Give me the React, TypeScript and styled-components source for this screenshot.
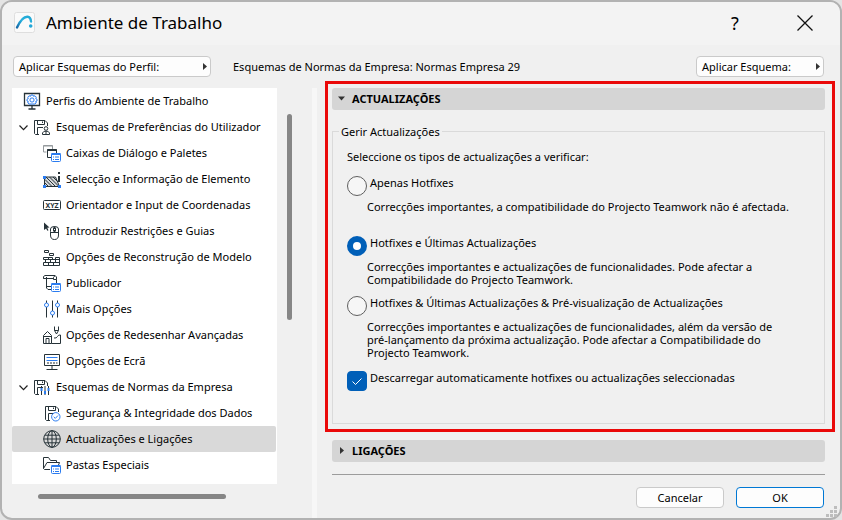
import React, { useState } from "react";
import styled, { createGlobalStyle } from "styled-components";

const INK = "#263238";
const BLUE = "#2b7cf0";

const GlobalStyle = createGlobalStyle`
  *, *::before, *::after { box-sizing: border-box; }
  body {
    margin: 0;
    background: #e4e4e4;
    color: #000;
    font: 11px/13px "Noto Sans", "Open Sans", sans-serif;
  }
  button, input { font: inherit; color: inherit; }
`;

const Dialog = styled.main`
  display: flex;
  flex-direction: column;
  min-height: 100vh;
  border: 2px solid #b2b2b2;
  border-radius: 12px;
  background: #f0f0f0;
  overflow: hidden;
`;

const TitleBar = styled.header`
  display: flex;
  align-items: center;
  height: 43px;
  padding: 0 23px 2px 12px;
  background: #f3f3f3;
`;

const Title = styled.h1`
  flex: 1;
  margin: 0 0 0 11px;
  font-size: 17px;
  line-height: 24px;
  font-weight: 400;
`;

const TitleButton = styled.button`
  display: flex;
  align-items: center;
  justify-content: center;
  width: 24px;
  height: 24px;
  margin-left: 46px;
  padding: 0;
  border: 0;
  background: none;
  font-size: 18px;
  line-height: 24px;
`;

const Toolbar = styled.div`
  display: flex;
  align-items: center;
  height: 36px;
  padding: 7px 16px 0 11px;
`;

const SchemeName = styled.div`
  flex: 1;
  padding-left: 22px;
`;

const PushButton = styled.button<{ $width: number; $primary?: boolean }>`
  width: ${(p) => p.$width}px;
  height: 21px;
  padding: 0 5px;
  border: 1px solid ${(p) => (p.$primary ? "#0078d4" : "#cacaca")};
  border-radius: 4px;
  background: #fdfdfd;
`;

const PopupButton = styled(PushButton)`
  display: flex;
  align-items: center;
  justify-content: space-between;
  padding-right: 1px;
`;

const Body = styled.div`
  display: grid;
  grid-template-columns: 310px 5px minmax(0, 1fr);
  flex: 1;
`;

const Sidebar = styled.nav`
  display: grid;
  grid-template-columns: 265px 5px;
  column-gap: 10px;
  align-content: start;
  padding: 7px 0 0 10px;
`;

const Tree = styled.ul`
  margin: 0;
  padding: 0 1px 6px 0;
  list-style: none;
  background: #fff;
`;

const TreeItem = styled.button<{ $level: number; $selected: boolean; $branch: boolean }>`
  display: flex;
  align-items: center;
  gap: 5px;
  width: 100%;
  height: 26px;
  padding: 0 0 0 ${(p) => (p.$branch ? 7 : 11 + p.$level * 10)}px;
  border: 0;
  border-radius: 2px;
  background: ${(p) => (p.$selected ? "#d9d9d9" : "transparent")};
  text-align: left;
  white-space: nowrap;
`;

const ItemText = styled.span`
  padding-bottom: 2px;
`;

const VerticalThumb = styled.div`
  height: 206px;
  margin-top: 26px;
  border-radius: 3px;
  background: #868686;
`;

const HorizontalThumb = styled.div`
  width: 188px;
  height: 5px;
  margin: 10px 0 0 26px;
  border-radius: 3px;
  background: #868686;
`;

const Splitter = styled.div`
  margin-top: 7px;
  background: #f7f7f7;
`;

const Content = styled.div`
  display: flex;
  flex-direction: column;
  padding: 0 5px 0 8px;
`;

const Highlight = styled.section`
  padding: 4px 7px 5px 4px;
  border: 3px solid #ea0909;
`;

const SectionHeader = styled.button`
  display: flex;
  align-items: center;
  gap: 6px;
  width: 100%;
  height: 22px;
  padding: 0 5px 2px;
  border: 0;
  border-radius: 3px;
  background: #d5d5d5;
  font-weight: 700;
`;

const Group = styled.fieldset`
  min-height: 300px;
  margin: 14px 0 0;
  padding: 11px 14px 0;
  border: 1px solid #dadada;
`;

const Legend = styled.legend`
  margin-left: -8px;
  padding: 0 2px;
  line-height: 15px;
`;

const Prompt = styled.p`
  margin: 0 0 13px;
`;

const Option = styled.div`
  min-height: 60px;
  padding-bottom: 10px;
`;

const Choice = styled.label`
  display: flex;
  gap: 3px;
  height: 20px;
`;

const DownloadChoice = styled(Choice)`
  margin-top: 2px;
`;

const Radio = styled.input.attrs({ type: "radio" })`
  appearance: none;
  flex: none;
  width: 20px;
  height: 20px;
  margin: 0;
  border: 1px solid #5f5f5f;
  border-radius: 50%;
  background: #f6f6f6;
  &:checked {
    border: 6px solid #005fb8;
    background: #fff;
  }
`;

const CheckMark = styled.span`
  display: grid;
  flex: none;
  width: 20px;
  height: 20px;
  > * { grid-area: 1 / 1; }
`;

const Checkbox = styled.input.attrs({ type: "checkbox" })`
  appearance: none;
  width: 20px;
  height: 20px;
  margin: 0;
  border: 1px solid #5f5f5f;
  border-radius: 4px;
  background: #f6f6f6;
  &:checked {
    border-color: #005fb8;
    background: #005fb8;
  }
`;

const Description = styled.p`
  max-width: 425px;
  margin: 4px 0 0 20px;
`;

const Lower = styled.div`
  margin: 8px 10px 0 7px;
`;

const Actions = styled.footer`
  display: flex;
  justify-content: flex-end;
  gap: 12px;
  margin-top: 12px;
  padding: 12px 1px 10px 0;
  border-top: 1px solid #9c9c9c;
`;

const Grip = styled.svg`
  position: absolute;
  right: 5px;
  bottom: 3px;
`;

const Frame = styled.div`
  position: relative;
`;

const Triangle = ({ down = false }: { down?: boolean }) => (
  <svg width="9" height="9" viewBox="0 0 9 9" fill="#333" aria-hidden="true">
    <path d={down ? "M1 2.5H8L4.5 6.5Z" : "M3 1V8L7 4.5Z"} />
  </svg>
);

const Chevron = () => (
  <svg width="9" height="9" viewBox="0 0 9 9" fill="none" stroke="#222" strokeWidth="1.2" aria-hidden="true">
    <path d="M0.5 2.5L4.5 6.7L8.5 2.5" />
  </svg>
);

const BlueSheet = () => (
  <g>
    <rect x="8.5" y="9.5" width="9" height="8" rx="1" fill="#fff" stroke={BLUE} />
    <path d="M8.5 10H17.5" stroke={BLUE} strokeWidth="2" />
    <path d="M10 13H11M12 13H16M10 15.5H11M12 15.5H16" stroke={BLUE} />
  </g>
);

const Floppy = () => (
  <g>
    <path d="M6 16.5H2.5L1.5 15.5V2.5H12L14.5 5V8" />
    <path d="M4.5 2.5V6.5H11.5V2.5M9.5 3.5V5M4.5 16V9.5H10" />
  </g>
);

const icons: Record<string, React.ReactNode> = {
  profile: (
    <>
      <path d="M1.5 1.5H16.5V13.5H1.5ZM9 13.5V17M5.5 17H12.5" strokeWidth="1.3" />
      <path
        stroke={BLUE}
        fill="#fff"
        d="M8 3H10L10.5 4.3L12 3.8L13.3 5.2L12.7 6.6L14 7.2V9L12.7 9.5L13.2 11L12 12H6L4.8 11L5.3 9.5L4 9V7.2L5.3 6.6L4.8 5.2L6 3.8L7.5 4.3Z"
      />
      <circle cx="9" cy="8" r="2.1" stroke={BLUE} fill="#fff" />
    </>
  ),
  user: (
    <>
      <Floppy />
      <circle cx="13" cy="10.5" r="1.8" fill="#fff" />
      <path d="M9.5 16.5V15L11 13.3H15L16.5 15V16.5ZM13 13.5V16" fill="#fff" />
    </>
  ),
  dialogs: (
    <>
      <path d="M3.5 8H0.5V1.5H9.5V5M0.5 2H9.5" stroke="#969b9e" />
      <path d="M8 13.5H4.5V5.5H13.5V9" />
      <path d="M4.5 6H13.5" strokeWidth="2" />
      <BlueSheet />
    </>
  ),
  selection: (
    <>
      <path d="M1.5 7H12.5L16.5 16.5H1.5Z" fill="#d6d8d9" />
      <path d="M2 9.5L9 16.5M2 13L5.5 16.5M3 7L12.5 16.5M6.5 7L16 16.5M10 7L15 12" />
      <path d="M16 2V4M16 6V12" strokeWidth="2" />
      <path d="M0 6H3V9H0ZM0 15H3V18H0ZM15 15H18V18H15Z" fill={BLUE} stroke="none" />
    </>
  ),
  xyz: (
    <>
      <rect x="0.5" y="4.5" width="17" height="9" rx="1" />
      <text x="9" y="12" textAnchor="middle" fontSize="7" fontWeight="700" fill={INK} stroke="none">XYZ</text>
    </>
  ),
  mouse: (
    <>
      <path d="M1 0.5L6.5 5.5L4.2 5.8L5.5 8.2L4.3 8.7L3.1 6.4L1 8Z" fill={INK} stroke="none" />
      <path d="M7.5 9.5V7Q7.5 4.5 11.5 4.5T15.5 7V13Q15.5 17.5 11.5 17.5T7.5 13V9.5M7.5 10.5H15.5M11.5 4.5V6M11.5 9V10.5" />
      <rect x="10.5" y="6" width="2" height="3" />
    </>
  ),
  bricks: (
    <>
      <path d="M1.5 2.5H5.5V4.5H1.5ZM6.5 5.5H10.5V7.5H6.5ZM12.5 11.5V9.5H16.5V11.5" />
      <path d="M0.5 9.5H9.5V11.5M0.5 9.5V11.5M0.5 11.5H17M5.5 9.5V11.5M2.5 11.5V14.5M7.5 11.5V14.5M12.5 11.5V14.5M16.5 11.5V14.5M0.5 14.5H17M0.5 14.5V17.5H16.5V14.5M5.5 14.5V17.5M10.5 14.5V17.5" />
    </>
  ),
  publisher: (
    <>
      <path d="M3.5 4.5H0.5V2.5L2 1.5H12L13.5 3V5.5H10.5V3.5L12 1.5M3.5 3V14L5 15.5H8M0.5 4.5H10.5M3.5 12.5H8M13.5 5.5V9" />
      <BlueSheet />
    </>
  ),
  sliders: (
    <>
      <path d="M3.5 0.5V3M3.5 7V17.5M9.5 0.5V11M9.5 15V17.5M14.5 0.5V3M14.5 7V17.5" />
      <g stroke={BLUE} fill="#fff">
        <circle cx="3.5" cy="5" r="2" />
        <circle cx="9.5" cy="13" r="2" />
        <circle cx="14.5" cy="5" r="2" />
      </g>
    </>
  ),
  redraw: (
    <>
      <path d="M0.5 9.5L4.5 5.5L8.5 9.5V17.5H0.5ZM0.5 10.5H8.5M3 17V12.5H6V17" />
      <path d="M11.5 0.5V4.5L13.5 8L15.5 4.5V0.5M11.5 4.5H15.5M8.5 17.5H17.5V9Q15.5 8.5 14.5 10.5T11 12" />
    </>
  ),
  screen: (
    <>
      <path d="M1.5 2.5H16.5V13.5H1.5ZM9 13.5V17M3.5 17.5H14.5" />
      <path d="M3.5 5.5H14.5" stroke={BLUE} />
      <path d="M3.5 8.5H14.5" stroke={BLUE} />
      <path d="M4 11H14.5" strokeDasharray="2 1" />
    </>
  ),
  standards: (
    <>
      <Floppy />
      <path d="M8.5 8V17M12 8V17M15.5 8V17" />
      <path d="M7.5 11.5H9.5M11 14.5H13M14.5 11.5H16.5" stroke={BLUE} strokeWidth="3" />
    </>
  ),
  security: (
    <>
      <g transform="translate(1 0)"><Floppy /></g>
      <circle cx="12.8" cy="12.8" r="4.2" stroke={BLUE} fill="#fff" />
      <path d="M10.7 12.8L12.3 14.4L15 11.5" stroke={BLUE} />
    </>
  ),
  globe: (
    <>
      <circle cx="9" cy="9" r="8.3" />
      <ellipse cx="9" cy="9" rx="4.3" ry="8.3" />
      <path d="M9 0.7V17.3M0.7 9H17.3M2 5.2H16M2 12.8H16" />
    </>
  ),
  folder: (
    <>
      <path d="M7 13.5H1.5L0.5 12.5V1.5H5.5L7.5 4.5H13.5V7M0.5 12.5L4 6.5H16.5L15.5 9" />
      <BlueSheet />
    </>
  ),
};

const Icon = ({ name }: { name: string }) => (
  <svg width="18" height="18" viewBox="0 0 18 18" fill="none" stroke={INK} aria-hidden="true">
    {icons[name]}
  </svg>
);

const AppLogo = () => (
  <svg width="21" height="22" viewBox="0 0 21 22" aria-hidden="true">
    <defs>
      <linearGradient id="arc" x1="0" y1="1" x2="1" y2="0">
        <stop offset="0" stopColor="#1769a8" />
        <stop offset="0.5" stopColor="#27b2df" />
        <stop offset="1" stopColor="#23a8d4" />
      </linearGradient>
    </defs>
    <rect x="0.5" y="0.5" width="20" height="20" rx="2" fill="#fafafa" stroke="#dedede" />
    <path d="M3 15.5C6 9 10 4.5 13.5 4.7C16 5 16.8 6.5 17 9.5" fill="none" stroke="url(#arc)" strokeWidth="2.4" strokeLinecap="round" />
    <circle cx="16.7" cy="14" r="1.8" fill="#22a7d8" />
  </svg>
);

const items: { text: string; icon: string; level: number; branch?: boolean }[] = [
  { text: "Perfis do Ambiente de Trabalho", icon: "profile", level: 0 },
  { text: "Esquemas de Preferências do Utilizador", icon: "user", level: 1, branch: true },
  { text: "Caixas de Diálogo e Paletes", icon: "dialogs", level: 2 },
  { text: "Selecção e Informação de Elemento", icon: "selection", level: 2 },
  { text: "Orientador e Input de Coordenadas", icon: "xyz", level: 2 },
  { text: "Introduzir Restrições e Guias", icon: "mouse", level: 2 },
  { text: "Opções de Reconstrução de Modelo", icon: "bricks", level: 2 },
  { text: "Publicador", icon: "publisher", level: 2 },
  { text: "Mais Opções", icon: "sliders", level: 2 },
  { text: "Opções de Redesenhar Avançadas", icon: "redraw", level: 2 },
  { text: "Opções de Ecrã", icon: "screen", level: 2 },
  { text: "Esquemas de Normas da Empresa", icon: "standards", level: 1, branch: true },
  { text: "Segurança & Integridade dos Dados", icon: "security", level: 2 },
  { text: "Actualizações e Ligações", icon: "globe", level: 2 },
  { text: "Pastas Especiais", icon: "folder", level: 2 },
];

const options = [
  {
    label: "Apenas Hotfixes",
    description: "Correcções importantes, a compatibilidade do Projecto Teamwork não é afectada.",
  },
  {
    label: "Hotfixes e Últimas Actualizações",
    description:
      "Correcções importantes e actualizações de funcionalidades. Pode afectar a Compatibilidade do Projecto Teamwork.",
  },
  {
    label: "Hotfixes & Últimas Actualizações & Pré-visualização de Actualizações",
    description:
      "Correcções importantes e actualizações de funcionalidades, além da versão de pré-lançamento da próxima actualização. Pode afectar a Compatibilidade do Projecto Teamwork.",
  },
];

export default function App() {
  const [selected, setSelected] = useState(13);
  const [choice, setChoice] = useState(1);
  const [auto, setAuto] = useState(true);

  return (
    <Frame>
      <GlobalStyle />
      <Dialog>
        <TitleBar>
          <AppLogo />
          <Title>Ambiente de Trabalho</Title>
          <TitleButton aria-label="Ajuda">?</TitleButton>
          <TitleButton aria-label="Fechar">
            <svg width="16" height="16" viewBox="0 0 16 16" stroke="#111" strokeWidth="1.3" aria-hidden="true">
              <path d="M0.5 0.5L15.5 15.5M15.5 0.5L0.5 15.5" />
            </svg>
          </TitleButton>
        </TitleBar>
        <Toolbar>
          <PopupButton $width={198}>Aplicar Esquemas do Perfil:<Triangle /></PopupButton>
          <SchemeName>Esquemas de Normas da Empresa: Normas Empresa 29</SchemeName>
          <PopupButton $width={128}>Aplicar Esquema:<Triangle /></PopupButton>
        </Toolbar>
        <Body>
          <Sidebar>
            <Tree>
              {items.map((item, i) => (
                <li key={item.text}>
                  <TreeItem
                    $level={item.level}
                    $branch={!!item.branch}
                    $selected={i === selected}
                    onClick={() => setSelected(i)}
                  >
                    {item.branch && <Chevron />}
                    <Icon name={item.icon} />
                    <ItemText>{item.text}</ItemText>
                  </TreeItem>
                </li>
              ))}
            </Tree>
            <VerticalThumb />
            <HorizontalThumb />
          </Sidebar>
          <Splitter />
          <Content>
            <Highlight>
              <SectionHeader aria-expanded="true"><Triangle down />ACTUALIZAÇÕES</SectionHeader>
              <Group>
                <Legend>Gerir Actualizações</Legend>
                <Prompt>Seleccione os tipos de actualizações a verificar:</Prompt>
                {options.map((option, i) => (
                  <Option key={option.label}>
                    <Choice>
                      <Radio name="updates" checked={choice === i} onChange={() => setChoice(i)} />
                      {option.label}
                    </Choice>
                    <Description>{option.description}</Description>
                  </Option>
                ))}
                <DownloadChoice>
                  <CheckMark>
                    <Checkbox checked={auto} onChange={(e) => setAuto(e.target.checked)} />
                    {auto && (
                      <svg width="20" height="20" viewBox="0 0 20 20" fill="none" stroke="#fff" pointerEvents="none" aria-hidden="true">
                        <path d="M5.5 10.5L8.5 13.5L14.5 7.5" />
                      </svg>
                    )}
                  </CheckMark>
                  Descarregar automaticamente hotfixes ou actualizações seleccionadas
                </DownloadChoice>
              </Group>
            </Highlight>
            <Lower>
              <SectionHeader aria-expanded="false"><Triangle />LIGAÇÕES</SectionHeader>
              <Actions>
                <PushButton $width={88}>Cancelar</PushButton>
                <PushButton $width={88} $primary>OK</PushButton>
              </Actions>
            </Lower>
          </Content>
        </Body>
      </Dialog>
      <Grip width="11" height="11" viewBox="0 0 11 11" fill="#bdbdbd" aria-hidden="true">
        <path d="M8 0H11V3H8ZM4 4H7V7H4ZM8 4H11V7H8ZM0 8H3V11H0ZM4 8H7V11H4ZM8 8H11V11H8Z" />
      </Grip>
    </Frame>
  );
}
